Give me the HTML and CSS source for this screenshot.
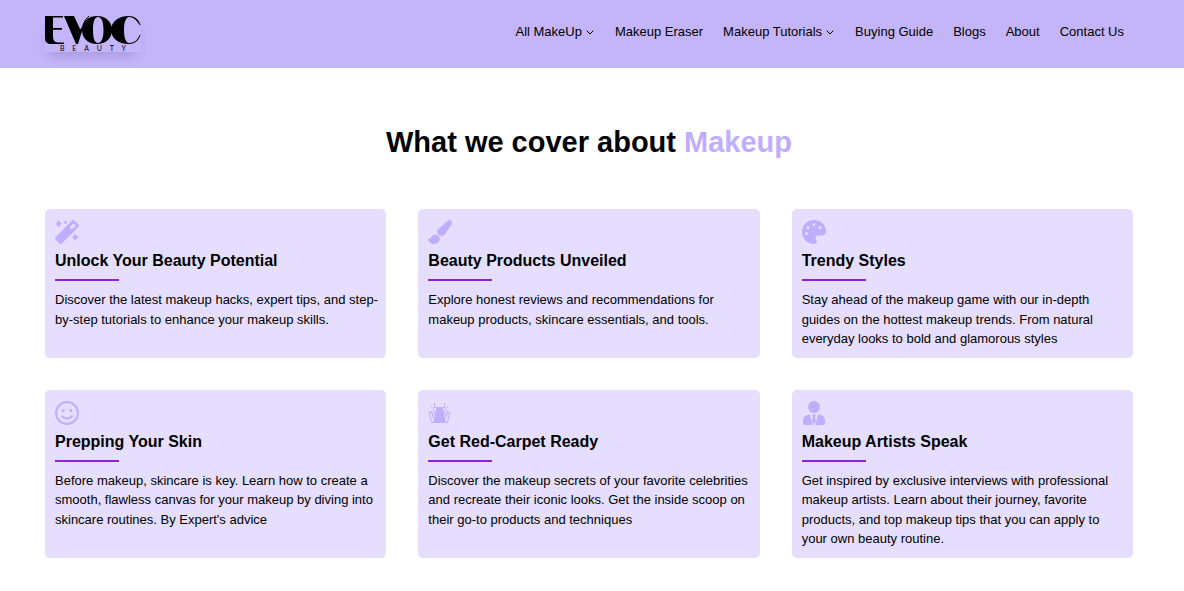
FILE: index.html
```html
<!DOCTYPE html>
<html lang="en">
<head>
<meta charset="utf-8">
<meta name="viewport" content="width=device-width, initial-scale=1">
<title>Evoc Beauty</title>
<link rel="stylesheet" href="styles.css">
</head>
<body>
<header class="header">
  <a class="logo" href="#" aria-label="Evoc Beauty">
    <svg class="logo-mark" viewBox="0 0 96 30" aria-hidden="true">
      <path d="M0 1h18v1.500H8v10.500h9v1.800H8v7q0 5.700 5 5.700h6v1.500H6q-6 0-6-6z"/>
      <path d="M19 1h10l6 13 3-1-5 16h-2Z"/>
      <path class="hairline" d="M35 18 38 10Q40 4 44 1"/>
      <path fill-rule="evenodd" d="M52 1c9 0 15 6 15 14s-6 14-15 14-15-6-15-14S43 1 52 1Zm1 1c-3.500 0-5 5-5 13s1.500 13 5 13 5.500-5 5.500-13-2-13-5.500-13Z"/>
      <path d="M94.500 10C92 5 88 2 84 2c-3 0-5 5-5 13s2 13 5 13c5 0 9-3 10.500-8l1 0c-2 6-6 9-12 9-10 0-17.500-6-17.500-14S73.500 1 83.500 1c6 0 10 3 12 9z"/>
    </svg>
    <span class="logo-text"><span>B</span><span>E</span><span>A</span><span>U</span><span>T</span><span>Y</span></span>
  </a>
  <nav class="nav">
    <a href="#">All MakeUp <svg class="chevron" viewBox="0 0 8 5" aria-hidden="true"><path d="M.7.7 4 4 7.300.7"/></svg></a>
    <a href="#">Makeup Eraser</a>
    <a href="#">Makeup Tutorials <svg class="chevron" viewBox="0 0 8 5" aria-hidden="true"><path d="M.7.7 4 4 7.300.7"/></svg></a>
    <a href="#">Buying Guide</a>
    <a href="#">Blogs</a>
    <a href="#">About</a>
    <a href="#">Contact Us</a>
  </nav>
</header>
<main class="main">
  <h1 class="heading">What we cover about <span class="accent">Makeup</span></h1>
  <div class="grid">
    <article class="card">
      <svg class="icon" viewBox="0 0 24 24" aria-hidden="true"><path fill-rule="evenodd" d="M17 .6q1.200-1.100 2.400 0l4 4q1.100 1.200 0 2.400L6.700 23.500q-1.200 1-2.400 0L.6 19.700q-1.100-1.200 0-2.400ZM18.500 3.200 14.500 7.200l2.300 2.300 4-4Z"/><path d="m3.700 0 1.200 2.500 2.600 1.300-2.600 1.300-1.200 2.600-1.300-2.600L0 3.800l2.400-1.300ZM10.500 0l.8 1.500 1.500.8-1.500.8-.8 1.500-.8-1.500-1.500-.8 1.500-.8ZM20.300 13.300l1.300 2.700 2.400 1.300-2.400 1.300-1.300 2.600-1.300-2.600-2.600-1.300 2.600-1.300Z"/></svg>
      <h2 class="title">Unlock Your Beauty Potential</h2>
      <p class="text">Discover the latest makeup hacks, expert tips, and step-by-step tutorials to enhance your makeup skills.</p>
    </article>
    <article class="card">
      <svg class="icon" viewBox="0 0 24 24" aria-hidden="true"><path d="M21.500 0c1.400 0 2.500 1.100 2.500 2.400 0 .7-.3 1.400-.6 2l-6.100 9.500c-1 1.500-2.500 2.100-4 2.100-2.100 0-4.200-2.100-4.200-4.100 0-1.200.5-2.200 1.300-3L19.800.8c.5-.4 1-.8 1.700-.8Z"/><path d="M6.500 14.800c2.900 0 5.300 1.700 5.300 4.300 0 3-2.700 4.900-6 4.900-3.700 0-5.800-2.700-5.800-6 .4.300 1.300.9 1.800.9 1.100 0 1.300-4.100 4.700-4.100Z"/></svg>
      <h2 class="title">Beauty Products Unveiled</h2>
      <p class="text">Explore honest reviews and recommendations for makeup products, skincare essentials, and tools.</p>
    </article>
    <article class="card">
      <svg class="icon" viewBox="0 0 24 24" aria-hidden="true"><path fill-rule="evenodd" d="M12 0c6.600 0 12 4.800 12 11 0 2.800-1.900 4.500-4.500 4.500h-3.700c-1.900 0-2.900 1.800-2 3.400l.8 1.600c.9 1.800-.5 3.500-2.600 3.500C5.400 24 0 18.600 0 12S5.400 0 12 0ZM4.500 12a1.500 1.500 0 1 0 0 3 1.500 1.500 0 0 0 0-3ZM6 6a1.500 1.500 0 1 0 0 3 1.500 1.500 0 0 0 0-3Zm6-3a1.500 1.500 0 1 0 0 3 1.500 1.500 0 0 0 0-3Zm6 3a1.500 1.500 0 1 0 0 3 1.500 1.500 0 0 0 0-3Z"/></svg>
      <h2 class="title">Trendy Styles</h2>
      <p class="text">Stay ahead of the makeup game with our in-depth guides on the hottest makeup trends. From natural everyday looks to bold and glamorous styles</p>
    </article>
    <article class="card">
      <svg class="icon" viewBox="0 0 24 24" aria-hidden="true"><circle class="stroke" cx="12" cy="12" r="10.900"/><circle cx="8.200" cy="9.600" r="1.600"/><circle cx="15.800" cy="9.600" r="1.600"/><path class="stroke" d="M7 15.200q5 4.600 10 0"/></svg>
      <h2 class="title">Prepping Your Skin</h2>
      <p class="text">Before makeup, skincare is key. Learn how to create a smooth, flawless canvas for your makeup by diving into skincare routines. By Expert's advice</p>
    </article>
    <article class="card">
      <svg class="icon" viewBox="0 0 24 24" aria-hidden="true"><path d="M8.500 6h6L18 22H5Z"/><path class="thin" d="M1 11.500h2.500M1.500 12 3.500 21.500h1M3.500 10 5 16.500M6.500 2.500v4h1.500M3.500 5.500 6 8.500v5M22 11.500h-2.500M21.500 12l-2 9.500h-1M19.500 10 18 16.500M16.500 2.500v4H15M19.500 5.500 17 8.500v5"/></svg>
      <h2 class="title">Get Red-Carpet Ready</h2>
      <p class="text">Discover the makeup secrets of your favorite celebrities and recreate their iconic looks. Get the inside scoop on their go-to products and techniques</p>
    </article>
    <article class="card">
      <svg class="icon" viewBox="0 0 24 24" aria-hidden="true"><circle cx="12" cy="6" r="6"/><path d="m8 13.500 2.700 10.500H3.700q-2.700 0-2.700-2.200v-2c0-3.500 2.700-6.200 7-6.300ZM16 13.500l-2.700 10.500h7q2.700 0 2.700-2.200v-2c0-3.500-2.700-6.200-7-6.300ZM10 13.500h4L13 16l1 4-2 3.500-2-3.500 1-4Z"/></svg>
      <h2 class="title">Makeup Artists Speak</h2>
      <p class="text">Get inspired by exclusive interviews with professional makeup artists. Learn about their journey, favorite products, and top makeup tips that you can apply to your own beauty routine.</p>
    </article>
  </div>
</main>
</body>
</html>
```
FILE: styles.css
```css
* {
  box-sizing: border-box;
}

body {
  margin: 0;
  background: #fff;
  color: #000;
  font-family: "Liberation Sans", Arial, sans-serif;
  font-size: 13px;
}

.header {
  display: flex;
  align-items: flex-start;
  justify-content: space-between;
  padding: 15px 60px 16px 45px;
  background: #c4b5fa;
}

.logo {
  display: flex;
  flex-direction: column;
  width: 96px;
  color: #000;
  text-decoration: none;
  box-shadow: 0 8px 12px -4px rgba(60, 40, 120, 0.2);
}

.logo-mark {
  display: block;
  width: 96px;
  height: 30px;
}

.hairline {
  fill: none;
  stroke: #000;
  stroke-width: 1;
}

.logo-text {
  display: flex;
  justify-content: space-between;
  padding: 0 15px;
  font-family: Lato, sans-serif;
  font-size: 7px;
  line-height: 7px;
}

.nav {
  display: flex;
  gap: 20px;
  padding-top: 7px;
  line-height: 20px;
  white-space: nowrap;
}

.nav a {
  display: flex;
  align-items: center;
  gap: 4px;
  color: #000;
  text-decoration: none;
}

.chevron {
  width: 8px;
  height: 5px;
  margin-right: 1px;
  fill: none;
  stroke: #000;
}

.main {
  padding: 56px 51px 32px 45px;
}

.heading {
  margin: 0 0 49px;
  font-size: 29px;
  line-height: 36px;
  text-align: center;
}

.accent {
  color: #bfaeff;
}

.grid {
  display: grid;
  grid-template-columns: repeat(3, 1fr);
  gap: 32px;
}

.card {
  padding: 11px 5px 9px 10px;
  border-radius: 5px;
  background: #e5deff;
}

.icon {
  display: block;
  width: 24px;
  height: 24px;
  fill: #bfaeff;
}

.stroke,
.thin {
  fill: none;
  stroke: #bfaeff;
  stroke-width: 2;
  stroke-linecap: round;
}

.thin {
  stroke-width: 1;
}

.title {
  margin: 5px 0 9px;
  font-size: 16px;
  line-height: 24px;
}

.title::after {
  content: "";
  display: block;
  width: 64px;
  height: 2px;
  margin-top: 6px;
  background: #8b22dd;
}

.text {
  margin: 0;
  line-height: 1.5;
}
```
